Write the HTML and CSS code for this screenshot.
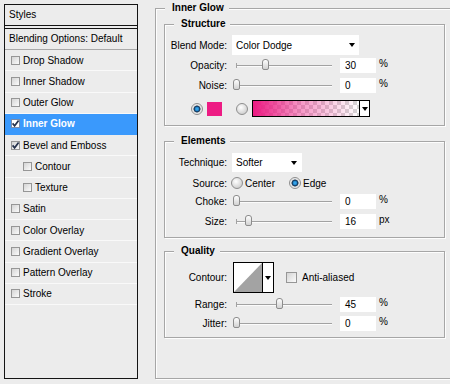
FILE: index.html
```html
<!DOCTYPE html>
<html>
<head>
<meta charset="utf-8">
<title>Layer Style - Inner Glow</title>
<link rel="stylesheet" href="styles.css">
</head>
<body>
<div class="dialog">
  <div class="styles-panel">
    <div class="panel-head">Styles</div>
    <div class="panel-blend">Blending Options: Default</div>
    <ul class="effects">
      <li class="effect"><span class="cb"></span>Drop Shadow</li>
      <li class="effect"><span class="cb"></span>Inner Shadow</li>
      <li class="effect"><span class="cb"></span>Outer Glow</li>
      <li class="effect selected"><span class="cb checked"><svg viewBox="0 0 9 9" width="9" height="9"><path d="M1.6 4.4 L3.6 6.8 L7.6 1.4" fill="none" stroke="#26324c" stroke-width="1.7"/></svg></span>Inner Glow</li>
      <li class="effect"><span class="cb checked"><svg viewBox="0 0 9 9" width="9" height="9"><path d="M1.6 4.4 L3.6 6.8 L7.6 1.4" fill="none" stroke="#26324c" stroke-width="1.7"/></svg></span>Bevel and Emboss</li>
      <li class="effect sub"><span class="cb"></span>Contour</li>
      <li class="effect sub"><span class="cb"></span>Texture</li>
      <li class="effect"><span class="cb"></span>Satin</li>
      <li class="effect"><span class="cb"></span>Color Overlay</li>
      <li class="effect"><span class="cb"></span>Gradient Overlay</li>
      <li class="effect"><span class="cb"></span>Pattern Overlay</li>
      <li class="effect"><span class="cb"></span>Stroke</li>
    </ul>
  </div>

  <fieldset class="group outer">
    <legend class="outer-title">Inner Glow</legend>

    <fieldset class="group sub-group structure">
      <legend>Structure</legend>
      <div class="row row-blend">
        <span class="lbl">Blend Mode:</span>
        <div class="select blend-select"><span>Color Dodge</span><i class="arrow"></i></div>
      </div>
      <div class="row row-a">
        <span class="lbl">Opacity:</span>
        <div class="slider"><div class="track"><span class="thumb" style="left:30%"></span></div></div>
        <span class="num">30</span><span class="unit">%</span>
      </div>
      <div class="row row-b">
        <span class="lbl">Noise:</span>
        <div class="slider"><div class="track"><span class="thumb" style="left:0%"></span></div></div>
        <span class="num">0</span><span class="unit">%</span>
      </div>
      <div class="row row-color">
        <span class="radio on"></span>
        <span class="swatch"></span>
        <span class="radio radio-grad"></span>
        <div class="gradient"><span class="grad-fill"></span><span class="grad-btn"><i class="arrow"></i></span></div>
      </div>
    </fieldset>

    <fieldset class="group sub-group elements">
      <legend>Elements</legend>
      <div class="row row-tech">
        <span class="lbl">Technique:</span>
        <div class="select tech-select"><span>Softer</span><i class="arrow"></i></div>
      </div>
      <div class="row row-source">
        <span class="lbl">Source:</span>
        <span class="radio src-center"></span><span class="opt">Center</span>
        <span class="radio on src-edge"></span><span class="opt">Edge</span>
      </div>
      <div class="row row-c">
        <span class="lbl">Choke:</span>
        <div class="slider"><div class="track"><span class="thumb" style="left:0%"></span></div></div>
        <span class="num">0</span><span class="unit">%</span>
      </div>
      <div class="row row-c">
        <span class="lbl">Size:</span>
        <div class="slider"><div class="track"><span class="thumb" style="left:12.5%"></span></div></div>
        <span class="num">16</span><span class="unit">px</span>
      </div>
    </fieldset>

    <fieldset class="group sub-group quality">
      <legend>Quality</legend>
      <div class="row row-contour">
        <span class="lbl">Contour:</span>
        <div class="contour">
          <span class="contour-preview"><svg viewBox="0 0 28 29" width="28" height="29" preserveAspectRatio="none"><polygon points="0,29 28,0 28,29" fill="#a3a3a3"/></svg></span>
          <span class="contour-btn"><i class="arrow"></i></span>
        </div>
        <span class="cb cb-aa"></span><span class="opt">Anti-aliased</span>
      </div>
      <div class="row row-d">
        <span class="lbl">Range:</span>
        <div class="slider"><div class="track"><span class="thumb" style="left:45%"></span></div></div>
        <span class="num">45</span><span class="unit">%</span>
      </div>
      <div class="row row-d">
        <span class="lbl">Jitter:</span>
        <div class="slider"><div class="track"><span class="thumb" style="left:0%"></span></div></div>
        <span class="num">0</span><span class="unit">%</span>
      </div>
    </fieldset>
  </fieldset>
</div>
</body>
</html>
```

FILE: styles.css
```css
html, body {
  margin: 0;
  height: 100%;
  overflow: hidden;
}

body {
  background: #ececec;
  font-family: "Liberation Sans", Arial, sans-serif;
  font-size: 10px;
  color: #000;
}

.dialog {
  display: flex;
  align-items: flex-start;
}

/* ---------- left styles list ---------- */
.styles-panel {
  margin: 4px 0 0 4px;
  width: 134px;
  height: 375px;
  box-sizing: border-box;
  border: 1px solid #141414;
  background: #ececec;
  display: flex;
  flex-direction: column;
  flex: none;
}

.panel-head {
  height: 21px;
  box-sizing: border-box;
  line-height: 19px;
  padding-left: 4px;
  border-bottom: 1px solid #141414;
}

.panel-blend {
  margin-top: 2px;
  height: 22px;
  box-sizing: border-box;
  line-height: 20px;
  padding-left: 4px;
  border-top: 1px solid #141414;
  border-bottom: 1px solid #a9a9a9;
}

.effects {
  list-style: none;
  margin: 0;
  padding: 0;
}

.effect {
  height: 21.25px;
  box-sizing: border-box;
  border-bottom: 1px solid #f9f9f9;
  display: flex;
  align-items: center;
  padding-left: 6px;
}

.effect.sub {
  padding-left: 18px;
}

.effect.selected {
  background: #3a99fc;
  color: #fff;
  font-weight: bold;
  border-bottom-color: #3a99fc;
}

.cb {
  width: 9px;
  height: 9px;
  box-sizing: border-box;
  border: 1px solid #969696;
  background: linear-gradient(135deg, #d4d4d4, #fbfbfb);
  margin-right: 3px;
  flex: none;
  position: relative;
}

.cb svg {
  position: absolute;
  left: -1px;
  top: -1px;
}

.effect.selected .cb {
  background: #fff;
  border-color: #7b8ba8;
}

/* ---------- group boxes ---------- */
.group {
  margin: 0;
  min-width: 0;
  border: 1px solid #a6a6a6;
  box-shadow: inset 1px 1px 0 #fdfdfd, 1px 1px 0 #fdfdfd;
  box-sizing: border-box;
}

.group > legend {
  font-weight: bold;
  line-height: 14px;
  padding: 0 5px 0 7px;
  margin-left: 9px;
  background: #ececec;
}

.outer {
  margin: 1px 0 0 17px;
  width: 295px;
  border-right: none;
  padding: 2px 0 40px 0;
  flex: none;
}

.outer > .outer-title {
  margin-left: 9px;
}

.sub-group {
  width: 281px;
  margin-left: 8px;
  padding: 0;
}

.structure {
  padding-top: 4px;
  padding-bottom: 8px;
}

.elements {
  margin-top: 8px;
  padding-top: 5px;
  padding-bottom: 8px;
}

.quality {
  margin-top: 6px;
  padding-top: 4px;
  padding-bottom: 6px;
}

/* ---------- rows ---------- */
.row {
  display: flex;
  align-items: center;
}

.lbl {
  width: 62px;
  text-align: right;
  margin-right: 5px;
  flex: none;
}

.row-blend { height: 20px; }
.row-a { height: 15px; margin-top: 3px; }
.row-b { height: 15px; margin-top: 5px; }
.row-color { height: 17px; margin-top: 7px; padding-left: 26px; }
.row-tech { height: 19px; }
.row-source { height: 12px; margin-top: 5px; }
.row-c { height: 15px; margin-top: 5px; }
.row-contour { height: 31px; }
.row-d { height: 15px; margin-top: 4px; }

/* ---------- dropdowns ---------- */
.select {
  background: #fff;
  box-sizing: border-box;
  display: flex;
  align-items: center;
  justify-content: space-between;
  padding-left: 4px;
}

.blend-select {
  width: 127px;
  height: 20px;
  padding-right: 4px;
}

.tech-select {
  width: 70px;
  height: 19px;
  padding-right: 5px;
}

.arrow {
  width: 0;
  height: 0;
  border-left: 3.5px solid transparent;
  border-right: 3.5px solid transparent;
  border-top: 4px solid #000;
}

/* ---------- sliders ---------- */
.slider {
  width: 100px;
  height: 15px;
  position: relative;
  flex: none;
}

.track {
  position: absolute;
  left: 4px;
  width: 96px;
  top: 7px;
  height: 1px;
  background: #a2a2a2;
  box-shadow: 0 1px 0 #fbfbfb;
}

.track::before {
  content: "";
  position: absolute;
  left: 0;
  top: -2px;
  width: 1px;
  height: 5px;
  background: #a2a2a2;
}

.thumb {
  position: absolute;
  top: -6px;
  width: 7px;
  height: 11px;
  margin-left: -3px;
  box-sizing: border-box;
  border: 1px solid #8c8c8c;
  border-radius: 3px 3px 2px 2px;
  background: linear-gradient(#fefefe, #d2d2d2);
}

.num {
  width: 36px;
  height: 15px;
  box-sizing: border-box;
  background: #fff;
  margin-left: 8px;
  padding-left: 5px;
  line-height: 15px;
  flex: none;
}

.unit {
  margin-left: 3px;
  align-self: flex-start;
  line-height: 11px;
}

/* ---------- radios ---------- */
.radio {
  width: 12px;
  height: 12px;
  box-sizing: border-box;
  border-radius: 50%;
  border: 1px solid #8e8e8e;
  background: radial-gradient(circle at 40% 35%, #ffffff, #d3d3d3 70%);
  flex: none;
}

.radio.on {
  background: radial-gradient(circle at 50% 50%, #48b4f2 0, #1e86cf 1.8px, #163f66 2.6px, #2b4a6a 3.2px, #d9d9d9 3.8px, #f2f2f2 5px);
}

.opt {
  margin-left: 2px;
}

.src-center { margin-left: -1px; }
.src-edge { margin-left: 14px; }

/* ---------- color row ---------- */
.swatch {
  width: 15px;
  height: 14px;
  background: #ed1c84;
  margin-left: 4px;
  flex: none;
}

.radio-grad {
  margin-left: 14px;
}

.gradient {
  margin-left: 4px;
  width: 118px;
  height: 17px;
  box-sizing: border-box;
  border: 1px solid #000;
  display: flex;
  flex: none;
}

.grad-fill {
  flex: 1;
  background:
    linear-gradient(to right, #ec1a82, rgba(236, 26, 130, 0.45) 45%, rgba(236, 26, 130, 0)),
    repeating-conic-gradient(#d6d6d6 0 25%, #ffffff 0 50%) 0 0 / 8px 8px;
}

.grad-btn {
  width: 9px;
  border-left: 1px solid #000;
  background: #fff;
  display: flex;
  align-items: center;
  justify-content: center;
}

.grad-btn .arrow {
  border-left-width: 3px;
  border-right-width: 3px;
  border-top-width: 4px;
}

/* ---------- contour ---------- */
.contour {
  width: 41px;
  height: 31px;
  box-sizing: border-box;
  border: 1px solid #000;
  display: flex;
  margin-left: 1px;
  flex: none;
}

.contour-preview {
  width: 28px;
  height: 29px;
  background: #fff;
  display: block;
}

.contour-preview svg {
  display: block;
}

.contour-btn {
  flex: 1;
  border-left: 1px solid #000;
  background: #fff;
  display: flex;
  align-items: center;
  justify-content: center;
}

.contour-btn .arrow {
  border-left-width: 3px;
  border-right-width: 3px;
}

.cb-aa {
  width: 11px;
  height: 11px;
  margin-left: 12px;
  margin-right: 3px;
}
```
